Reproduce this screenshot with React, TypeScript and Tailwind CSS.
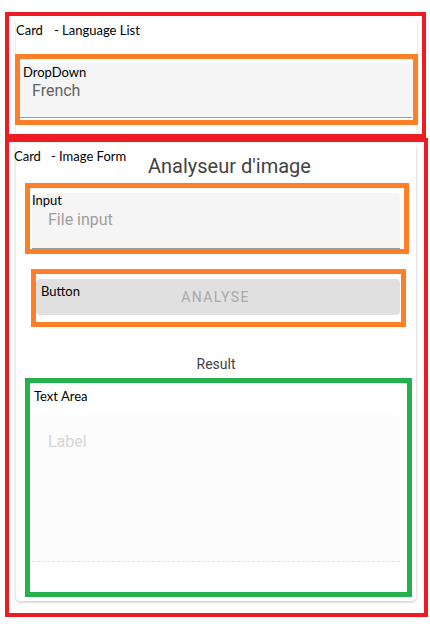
import React from "react";

const note = "absolute whitespace-nowrap text-[13px] leading-[16px] text-black font-['Lato',sans-serif]";

// annotation labels drawn over the wireframe
function Note({ children, className }: { children: React.ReactNode; className: string }) {
  return <span className={`${note} ${className}`}>{children}</span>;
}

export default function App() {
  return (
    <div className="flex w-[430px] h-[625px] flex-col bg-white overflow-hidden pt-[12px] pl-[5px] font-['Roboto',sans-serif]">
      {/* Card - language list */}
      <div className="flex w-[421px] h-[126px] flex-col border-4 border-[#ed1c24] overflow-hidden pl-[7px] pt-[3px]">
        <div className="relative flex w-[401px] h-[200px] shrink-0 flex-col bg-white rounded-[4px] shadow-[0_1px_3px_rgba(0,0,0,0.22)] pt-[35px]">
          <Note className="left-0 top-[3px]">
            Card<span className="ml-[11px]">- Language List</span>
          </Note>
          <div className="-ml-[1px] w-[403px] h-[71px] border-[5px] border-[#ff7f27] pt-[3px]">
            <div className="relative w-[392px] h-[56px] bg-[#f5f5f5] border-b border-[#9e9e9e] pl-[12px] pt-[19px]">
              <Note className="left-[3px] top-[2px]">DropDown</Note>
              <div className="text-[16px] leading-[19px] text-[#616161]">French</div>
            </div>
          </div>
        </div>
      </div>

      {/* Card - image form */}
      <div className="flex w-[423px] h-[479px] flex-col border-4 border-[#ed1c24] overflow-hidden pl-[7px] pt-[1px]">
        <div className="relative flex w-[400px] h-[458px] flex-col bg-white rounded-[4px] shadow-[0_1px_3px_rgba(0,0,0,0.25)] pt-[11px]">
          <Note className="-left-[2px] top-[5px]">
            Card<span className="ml-[10px]">- Image Form</span>
          </Note>
          <h1 className="pl-[132px] text-[20px] leading-[24px] text-[#424242]">Analyseur d'image</h1>

          <div className="ml-[9px] mt-[5px] w-[384px] h-[71px] border-[5px] border-[#ff7f27] pt-[5px] pl-[2px]">
            <div className="relative w-[368px] h-[56px] bg-[#f5f5f5] rounded-t-[4px] border-b border-[#9e9e9e] pl-[16px] pt-[17px]">
              <Note className="left-0 -top-[1px]">Input</Note>
              <div className="text-[16px] leading-[19px] text-[#9e9e9e]">File input</div>
            </div>
          </div>

          <div className="ml-[15px] mt-[15px] w-[375px] h-[58px] border-[5px] border-[#ff7f27] pt-[5px]">
            <button className="relative flex w-[364px] h-[36px] items-center justify-center rounded-[4px] bg-[#e0e0e0] pr-[5px] text-[14px] tracking-[1.4px] text-[#a9a9a9]">
              <Note className="left-[5px] top-[4px] tracking-normal">Button</Note>
              ANALYSE
            </button>
          </div>

          <div className="mt-[29px] text-center text-[14px] leading-[16px] text-[#424242]">Result</div>

          <div className="relative ml-[9px] mt-[6px] w-[387px] h-[219px] border-[5px] border-[#22b14c] pt-[32px] pl-[2px]">
            <Note className="left-[4px] top-[5px]">Text Area</Note>
            <div className="w-[368px] h-[147px] bg-[#fcfcfc] rounded-t-[4px] border-b border-dashed border-[#e0e0e0] pl-[16px] pt-[17px]">
              <div className="text-[16px] leading-[19px] text-[#d6d6d6]">Label</div>
            </div>
          </div>
        </div>
      </div>
    </div>
  );
}
